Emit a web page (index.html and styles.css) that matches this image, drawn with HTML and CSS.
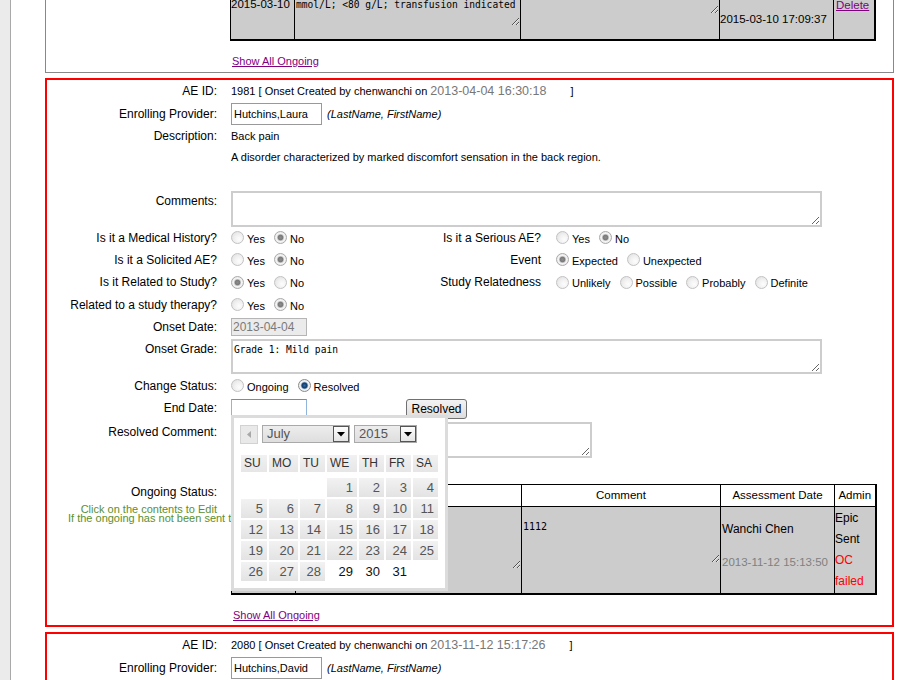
FILE: index.html
```html
<!DOCTYPE html>
<html>
<head>
<meta charset="utf-8">
<title>AE</title>
<link rel="stylesheet" href="styles.css">
</head>
<body>
<div class="page">

  <div class="topbox">
    <table class="ot">
      <colgroup><col class="c1"><col class="c2"><col class="c3"><col class="c4"><col class="c5"></colgroup>
      <tr class="trow">
        <td class="vt t-date">2015-03-10</td>
        <td class="vt"><textarea class="cellta ta-desc">mmol/L; &lt;80 g/L; transfusion indicated</textarea></td>
        <td class="vt"><textarea class="cellta ta-com"></textarea></td>
        <td class="t-ad">2015-03-10 17:09:37</td>
        <td class="vt t-adm"><a href="#" class="lnk">Delete</a></td>
      </tr>
    </table>
    <div class="showrow"><a href="#" class="lnk">Show All Ongoing</a></div>
  </div>

  <div class="ae">
    <div class="row h22">
      <div class="lbl">AE ID:</div>
      <div class="val">1981 [ Onset Created by chenwanchi on <span class="stamp">2013-04-04 16:30:18</span><span class="brk">]</span></div>
    </div>
    <div class="row h22 mt1">
      <div class="lbl">Enrolling Provider:</div>
      <div class="val"><input class="prov" value="Hutchins,Laura"><i class="hint">(LastName, FirstName)</i></div>
    </div>
    <div class="row h22">
      <div class="lbl">Description:</div>
      <div class="val">Back pain</div>
    </div>
    <div class="row h20">
      <div class="lbl"></div>
      <div class="val">A disorder characterized by marked discomfort sensation in the back region.</div>
    </div>
    <div class="row top r-com">
      <div class="lbl pt3">Comments:</div>
      <div class="val"><textarea class="ta ta-comments"></textarea></div>
    </div>
    <div class="row h22">
      <div class="lbl">Is it a Medical History?</div>
      <div class="opts left"><input type="radio" class="rb" name="mh"><span class="ot-l">Yes</span><input type="radio" class="rb" name="mh" checked><span class="ot-l">No</span></div>
      <div class="lbl2">Is it a Serious AE?</div>
      <div class="opts"><input type="radio" class="rb" name="se"><span class="ot-l">Yes</span><input type="radio" class="rb" name="se" checked><span class="ot-l">No</span></div>
    </div>
    <div class="row h22">
      <div class="lbl">Is it a Solicited AE?</div>
      <div class="opts left"><input type="radio" class="rb" name="so"><span class="ot-l">Yes</span><input type="radio" class="rb" name="so" checked><span class="ot-l">No</span></div>
      <div class="lbl2">Event</div>
      <div class="opts"><input type="radio" class="rb" name="ev" checked><span class="ot-l">Expected</span><input type="radio" class="rb" name="ev"><span class="ot-l">Unexpected</span></div>
    </div>
    <div class="row h23">
      <div class="lbl">Is it Related to Study?</div>
      <div class="opts left"><input type="radio" class="rb" name="rs" checked><span class="ot-l">Yes</span><input type="radio" class="rb" name="rs"><span class="ot-l">No</span></div>
      <div class="lbl2">Study Relatedness</div>
      <div class="opts"><input type="radio" class="rb" name="sr"><span class="ot-l">Unlikely</span><input type="radio" class="rb" name="sr"><span class="ot-l">Possible</span><input type="radio" class="rb" name="sr"><span class="ot-l">Probably</span><input type="radio" class="rb" name="sr"><span class="ot-l">Definite</span></div>
    </div>
    <div class="row h22">
      <div class="lbl">Related to a study therapy?</div>
      <div class="opts left"><input type="radio" class="rb" name="st"><span class="ot-l">Yes</span><input type="radio" class="rb" name="st" checked><span class="ot-l">No</span></div>
    </div>
    <div class="row h22">
      <div class="lbl">Onset Date:</div>
      <div class="val"><input class="date dis" value="2013-04-04" disabled></div>
    </div>
    <div class="row top mt1">
      <div class="lbl pt3">Onset Grade:</div>
      <div class="val"><textarea class="ta ta-grade">Grade 1: Mild pain</textarea></div>
    </div>
    <div class="row h22 mt1">
      <div class="lbl">Change Status:</div>
      <div class="opts"><input type="radio" class="rb" name="cs"><span class="ot-l">Ongoing</span><input type="radio" class="rb rb-blue" name="cs" checked><span class="ot-l">Resolved</span></div>
    </div>
    <div class="row h22">
      <div class="lbl">End Date:</div>
      <div class="val endval">
        <span class="dp">
          <input class="date focus" value="">
          <div class="cal">
            <div class="cal-head">
              <span class="prev"><svg width="5" height="7" viewBox="0 0 5 7"><path d="M4 0 L0 3.5 L4 7 Z" fill="#a8a8a8"/></svg></span>
              <span class="sel sel-m">July<span class="arr"><svg width="8" height="5" viewBox="0 0 8 5"><path d="M0 0 H8 L4 4.5 Z" fill="#000"/></svg></span></span>
              <span class="sel sel-y">2015<span class="arr"><svg width="8" height="5" viewBox="0 0 8 5"><path d="M0 0 H8 L4 4.5 Z" fill="#000"/></svg></span></span>
            </div>
            <div class="cal-grid dh-grid">
              <span class="dh">SU</span><span class="dh">MO</span><span class="dh">TU</span><span class="dh">WE</span><span class="dh">TH</span><span class="dh">FR</span><span class="dh">SA</span>
            </div>
            <div class="cal-grid days">
              <span class="d e"></span><span class="d e"></span><span class="d e"></span><span class="d">1</span><span class="d">2</span><span class="d">3</span><span class="d">4</span>
              <span class="d">5</span><span class="d">6</span><span class="d">7</span><span class="d">8</span><span class="d">9</span><span class="d">10</span><span class="d">11</span>
              <span class="d">12</span><span class="d">13</span><span class="d">14</span><span class="d">15</span><span class="d">16</span><span class="d">17</span><span class="d">18</span>
              <span class="d">19</span><span class="d">20</span><span class="d">21</span><span class="d">22</span><span class="d">23</span><span class="d">24</span><span class="d">25</span>
              <span class="d">26</span><span class="d">27</span><span class="d">28</span><span class="d f">29</span><span class="d f">30</span><span class="d f">31</span><span class="d e"></span>
            </div>
          </div>
        </span>
        <button class="btn">Resolved</button>
      </div>
    </div>
    <div class="row top r-rc">
      <div class="lbl pt3">Resolved Comment:</div>
      <div class="val"><textarea class="ta ta-rc"></textarea></div>
    </div>
    <div class="row top r-og">
      <div class="lbl lbl-og">
        <div class="ogl">Ongoing Status:</div>
        <div class="note n1">Click on the contents to Edit</div>
        <div class="note n2">If the ongoing has not been sent to Epic, it can be edited</div>
      </div>
      <div class="val">
        <table class="ot og">
          <colgroup><col class="c1"><col class="c2"><col class="c3"><col class="c4"><col class="c5"></colgroup>
          <tr class="hrow"><th>Date</th><th>Ongoing</th><th>Comment</th><th>Assessment Date</th><th>Admin</th></tr>
          <tr class="brow">
            <td class="vt"></td>
            <td class="vt"><textarea class="cellta ta-og"></textarea></td>
            <td class="vt"><textarea class="cellta ta-c">1112</textarea></td>
            <td class="vt b-ad"><div class="who">Wanchi Chen</div><div class="when">2013-11-12 15:13:50</div></td>
            <td class="vt b-adm"><div>Epic</div><div>Sent</div><div class="red">OC</div><div class="red">failed</div></td>
          </tr>
        </table>
      </div>
    </div>
    <div class="row showrow2">
      <div class="lbl"></div>
      <div class="val"><a href="#" class="lnk">Show All Ongoing</a></div>
    </div>
  </div>

  <div class="ae ae2">
    <div class="row h22">
      <div class="lbl">AE ID:</div>
      <div class="val">2080 [ Onset Created by chenwanchi on <span class="stamp">2013-11-12 15:17:26</span><span class="brk">]</span></div>
    </div>
    <div class="row h22 mt1">
      <div class="lbl">Enrolling Provider:</div>
      <div class="val"><input class="prov" value="Hutchins,David"><i class="hint">(LastName, FirstName)</i></div>
    </div>
    <div class="row h22">
      <div class="lbl">Description:</div>
      <div class="val">Back pain</div>
    </div>
  </div>

</div>
</body>
</html>
```

FILE: styles.css
```css
html, body { margin: 0; padding: 0; }
body {
  background: #ebebeb;
  font-family: "Liberation Sans", Arial, sans-serif;
  font-size: 11px;
  color: #000;
  height: 680px;
  overflow: hidden;
}
.page {
  margin-left: 10px;
  border-left: 1px solid #a9a9a9;
  background: #fff;
  min-height: 900px;
  padding: 0 21px 0 34px;
}

/* top (previous) box */
.topbox {
  border: 1px solid #888;
  margin-top: -8px;
  padding-bottom: 5px;
}
.showrow { margin: 14px 0 0 186px; line-height: 12px; }
.lnk { color: #800080; text-decoration: underline; font-size: 11px; }

/* tables */
.ot {
  border-collapse: collapse;
  table-layout: fixed;
  width: 644px;
  margin-left: 184px;
  border-bottom: 2px solid #000;
  border-right: 2px solid #000;
}
.ot td, .ot th { border: 1px solid #000; padding: 0; }
.ot .c1 { width: 64px; }
.ot .c2 { width: 226px; }
.ot .c3 { width: 199px; }
.ot .c4 { width: 114px; }
.ot .c5 { width: 41px; }
.vt { vertical-align: top; }
.trow { height: 46px; background: #ccc; }
.t-date { font-size: 11.5px; padding-top: 4px !important; }
.t-ad { font-size: 11.5px; padding-top: 6px !important; }
.t-adm { padding: 5px 0 0 2px !important; }
.t-adm .lnk { font-size: 11.5px; }
.cellta {
  display: block;
  box-sizing: border-box;
  width: 100%;
  border: none;
  background: transparent;
  font-family: "DejaVu Sans Mono", monospace;
  font-size: 9.6px;
  line-height: 13px;
  padding: 0 1px;
  margin: 0;
  color: #000;
  outline: none;
}
.ta-desc { height: 32px; padding-top: 4px; }
.ta-com { height: 20px; }
.ta-og { height: 62px; }
.ta-c { height: 56px; padding-top: 13px; font-size: 10px; }

.og { margin-left: 0; }
.hrow { height: 22px; background: #fff; }
.hrow th { font-weight: normal; font-size: 11.5px; text-align: center; }
.brow { height: 88px; background: #ccc; }
.b-ad { padding: 15px 0 0 1px !important; font-size: 12px; }
.b-ad .when { color: #808080; font-size: 11.5px; margin-top: 19px; }
.b-adm { font-size: 12px; line-height: 21px; padding-top: 1px !important; }
.red { color: #f00; }

/* AE box */
.ae {
  border: 2px solid #f00;
  margin-top: 5px;
  padding-bottom: 3px;
}
.ae2 { margin-top: 5px; }
.row { display: flex; align-items: center; }
.row.top { align-items: flex-start; }
.h20 { height: 20px; }
.h22 { height: 22px; }
.h23 { height: 23px; }
.mt1 { margin-top: 1px; }
.lbl {
  flex: none;
  width: 184px;
  box-sizing: border-box;
  padding-right: 14px;
  text-align: right;
  font-size: 12px;
  line-height: 14px;
  white-space: nowrap;
}
.pt3 { padding-top: 3px; }
.val { font-size: 11px; line-height: 14px; flex: none; }
.stamp { color: #777; font-size: 12.5px; }
.brk { margin-left: 24px; }

.prov {
  box-sizing: border-box;
  width: 91px;
  height: 22px;
  border: 1px solid #999;
  padding: 0 2px;
  font-family: "Liberation Sans", Arial, sans-serif;
  font-size: 11px;
  margin: 0;
  vertical-align: middle;
}
.hint { margin-left: 5px; vertical-align: middle; }

.ta {
  display: block;
  box-sizing: border-box;
  border: 2px solid #cdcdcd;
  margin: 0;
  padding: 2px 1px;
  font-family: "DejaVu Sans Mono", monospace;
  font-size: 9.6px;
  line-height: 13px;
  color: #000;
  background: #fff;
}
.r-com { margin-top: 24px; }
.ta-comments { width: 591px; height: 36px; }
.ta-grade { width: 591px; height: 35px; }
.ta-rc { width: 361px; height: 36px; }
.r-rc { margin-top: 3px; }

/* radios */
.opts { display: flex; align-items: center; font-size: 11px; flex: none; }
.opts.left { width: 130px; }
.lbl2 {
  flex: none;
  width: 195px;
  box-sizing: border-box;
  padding-right: 15px;
  text-align: right;
  font-size: 12px;
  white-space: nowrap;
}
.rb {
  -webkit-appearance: none;
  appearance: none;
  width: 13px;
  height: 13px;
  margin: 0;
  border-radius: 50%;
  border: 1px solid #c2c2c2;
  box-sizing: border-box;
  background: radial-gradient(circle at 65% 65%, #fdfdfd 0, #f1f1f1 45%, #dcdcdc 100%);
  flex: none;
}
.rb:checked {
  border-color: #a9a9a9;
  background: radial-gradient(circle at 50% 50%, #8c8c8c 0, #7a7a7a 2.4px, #c9c9c9 3.2px, #f4f4f4 4px, #e2e2e2 100%);
}
.rb.rb-blue:checked {
  border-color: #8a8a8a;
  background: radial-gradient(circle at 50% 50%, #2e6aa8 0, #0f3a66 2.6px, #9bb3cc 3.4px, #f4f4f4 4.2px, #e2e2e2 100%);
}
.ot-l { margin: 2px 9px 0 3px; }

/* dates */
.date {
  box-sizing: border-box;
  width: 76px;
  height: 18px;
  margin: 0;
  padding: 0 1px;
  font-family: "Liberation Sans", Arial, sans-serif;
  font-size: 12px;
  border: 1px solid #a9a9a9;
  vertical-align: middle;
}
.date.dis { background: #ebebeb; color: #7a7a7a; border-color: #b5b5b5; }
.date.focus { border: 1px solid #8fb5dc; border-top-color: #5e93c8; outline: none; height: 18px; }
.endval { display: flex; align-items: center; }
.dp { position: relative; display: inline-block; height: 18px; }
.btn {
  margin: 3px 0 0 99px;
  height: 20px;
  width: 61px;
  padding: 0;
  border: 1px solid #707070;
  border-radius: 3px;
  background: linear-gradient(#f3f3f3, #dddddd);
  font-family: "Liberation Sans", Arial, sans-serif;
  font-size: 12px;
  color: #000;
}

/* calendar */
.cal {
  position: absolute;
  left: 0;
  top: 16px;
  z-index: 10;
  width: 217px;
  box-sizing: border-box;
  border: 3px solid #dcdcdc;
  background: #fff;
  padding: 7px 7px 7px 7px;
}
.cal-head { display: flex; align-items: center; height: 19px; }
.prev {
  box-sizing: border-box;
  width: 18px;
  height: 19px;
  margin-left: -1px;
  border: 1px solid #d2d2d2;
  background: #e9e9e9;
  display: flex;
  align-items: center;
  justify-content: center;
}
.sel {
  position: relative;
  box-sizing: border-box;
  height: 18px;
  margin-left: 4px;
  border: 1px solid #a9a9a9;
  background: linear-gradient(#ededed, #dedede);
  color: #555;
  font-size: 13px;
  line-height: 16px;
  padding-left: 4px;
}
.sel-m { width: 88px; }
.sel-y { width: 63px; }
.arr {
  position: absolute;
  right: 0;
  top: 0;
  box-sizing: border-box;
  width: 16px;
  height: 16px;
  border: 1px solid #555;
  background: linear-gradient(#fdfdfd, #e4e4e4);
  display: flex;
  align-items: center;
  justify-content: center;
}
.cal-grid {
  display: grid;
  grid-template-columns: 26px 29px 25px 30px 25px 25px 25px;
  column-gap: 2px;
}
.dh-grid { margin-top: 11px; }
.dh {
  height: 17px;
  line-height: 17px;
  padding-left: 3px;
  font-size: 12px;
  color: #333;
  background: linear-gradient(#f1f1f1, #e6e6e6);
}
.days { margin-top: 6px; row-gap: 2px; grid-auto-rows: 19px; }
.d {
  text-align: right;
  padding-right: 4px;
  font-size: 13px;
  line-height: 20px;
  color: #555;
  background: linear-gradient(#f2f2f2, #e3e3e3);
}
.d.e { background: none; }
.d.f { background: none; color: #111; }

/* ongoing */
.r-og { margin-top: 26px; }
.lbl-og { padding-right: 0; }
.ogl { padding-right: 14px; line-height: 14px; padding-top: 1px; }
.note { color: #5b8f2d; font-size: 11px; line-height: 9px; }
.n1 { text-align: right; padding-right: 14px; margin-top: 6px; }
.n2 { text-align: left; padding-left: 21px; white-space: nowrap; }
.showrow2 { margin-top: 13px; line-height: 12px; }
.showrow2 .val { padding-left: 2px; }
```
